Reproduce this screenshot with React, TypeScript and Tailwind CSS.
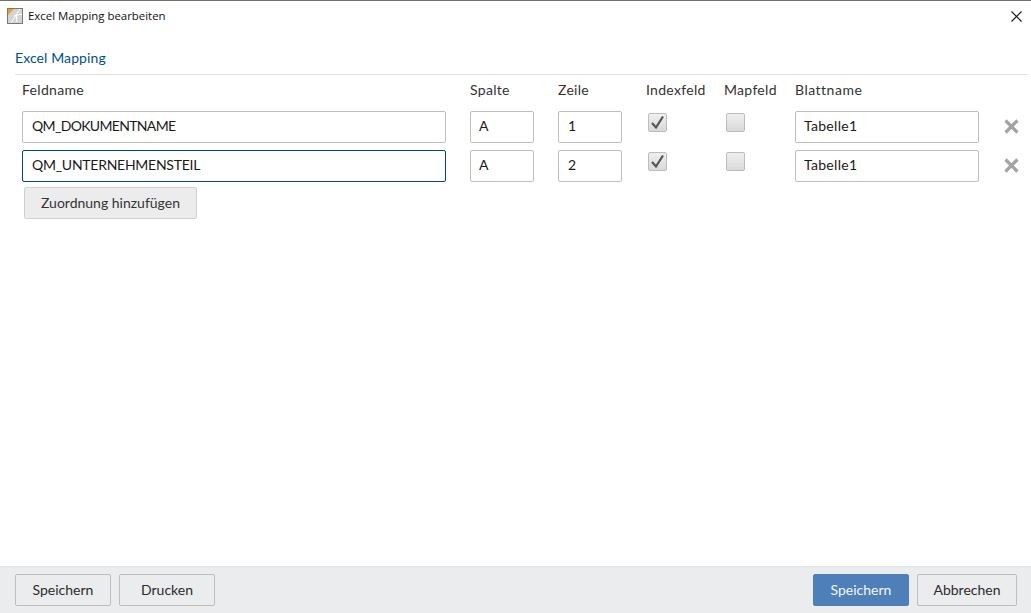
import React from "react";

const COLS = "grid grid-cols-[424px_64px_64px_54px_47px_184px_16px] gap-x-6 items-start";
const UI = "font-['Lato','Noto_Sans',sans-serif]";

function TitleIcon() {
  return (
    <svg width="16" height="16" viewBox="0 0 16 16" className="shrink-0">
      <rect x="0.5" y="0.5" width="15" height="15" fill="#d4d4d4" stroke="#777" />
      <path d="M1 1h6L1 7z" fill="#f0a020" />
      <path d="M4 15L13 1M7 8l8 -2M9 6l1 8" stroke="#fff" strokeWidth="1" fill="none" />
    </svg>
  );
}

function Field({ value, focused, track = "", pad = "pl-[9px]" }: { value: string; focused?: boolean; track?: string; pad?: string }) {
  return (
    <input
      readOnly
      value={value}
      className={`block w-full h-8 pr-2 pb-[3px] rounded-[2px] bg-white text-[14px] text-[#1a1a1a] outline-none border ${pad} ${track} ${
        focused ? "border-[#004a7c]" : "border-[#bdbdbd]"
      }`}
    />
  );
}

function Check({ checked }: { checked?: boolean }) {
  return (
    <div className="mt-[2px] ml-[2px] w-[19px] h-[19px] rounded-[2px] border border-[#bcbcbc] bg-gradient-to-b from-[#efefef] to-[#d9d9d9] flex items-center justify-center">
      {checked && (
        <svg width="15" height="15" viewBox="0 0 15 15">
          <path d="M2 8L6 12.5L13 1.5" stroke="#555" strokeWidth="2.2" fill="none" />
        </svg>
      )}
    </div>
  );
}

function Remove() {
  return (
    <div className="mt-2 ml-px flex">
      <svg width="15" height="15" viewBox="0 0 15 15">
        <path d="M1.5 1.5L13.5 13.5M13.5 1.5L1.5 13.5" stroke="#a3a3a3" strokeWidth="3.2" fill="none" />
      </svg>
    </div>
  );
}

function Row({ name, focused, track }: { name: string; focused?: boolean; track: string }) {
  return (
    <div className={COLS}>
      <Field value={name} focused={focused} track={track} />
      <Field value="A" pad="pl-2" />
      <Field value={focused ? "2" : "1"} />
      <Check checked />
      <Check />
      <Field value="Tabelle1" pad="pl-2" track="tracking-[0.3px]" />
      <Remove />
    </div>
  );
}

function Btn({ children, primary, w }: { children: React.ReactNode; primary?: boolean; w: string }) {
  return (
    <button
      className={`h-8 pb-[2px] rounded-[2px] border text-[14px] ${w} ${
        primary
          ? "bg-[#4f7fb8] border-[#4f7fb8] text-[#f4f7fb]"
          : "bg-[#ebecee] border-[#bdbdbd] text-[#2b2b2b]"
      }`}
    >
      {children}
    </button>
  );
}

export default function App() {
  return (
    <div className={`w-[1031px] h-[613px] bg-white flex flex-col overflow-hidden text-[14px] ${UI}`}>
      <div className="h-px bg-[#6f6f6f]" />
      <div className="h-[31px] flex items-center pl-[7px] pr-[7px] pb-[1px] gap-[5px]">
        <TitleIcon />
        <span className="text-[11.4px] text-[#111] font-['Open_Sans',sans-serif] flex-1">Excel Mapping bearbeiten</span>
        <svg width="11" height="11" viewBox="0 0 11 11" className="mr-[2px]">
          <path d="M0.5 0.5L10.5 10.5M10.5 0.5L0.5 10.5" stroke="#111" strokeWidth="1.1" fill="none" />
        </svg>
      </div>
      <div className="flex-1 pt-[17px] pl-[15px] pr-[3px]">
        <div className="h-[26px] border-b border-[#e2e2e2] text-[14px] leading-[18px] tracking-[0.1px] text-[#00508a]">Excel Mapping</div>
        <div className="pl-[7px] pt-[5px]">
          <div className={`${COLS} h-[31px] leading-[20px] tracking-[0.3px] text-[#333]`}>
            <span>Feldname</span>
            <span>Spalte</span>
            <span>Zeile</span>
            <span>Indexfeld</span>
            <span>Mapfeld</span>
            <span className="tracking-[0.5px]">Blattname</span>
          </div>
          <div className="flex flex-col gap-[7px]">
            <Row name="QM_DOKUMENTNAME" track="tracking-[-0.66px]" />
            <Row name="QM_UNTERNEHMENSTEIL" focused track="tracking-[-0.26px]" />
          </div>
          <button className="mt-[5px] ml-[2px] pb-[2px] w-[173px] h-8 rounded-[2px] border border-[#d0d0d0] bg-[#ececec] text-[14px] text-[#333]">
            Zuordnung hinzufügen
          </button>
        </div>
      </div>
      <div className="h-[47px] bg-[#ebecee] border-t border-[#e2e3e5] pt-[7px] pl-[15px] pr-[14px] flex justify-between">
        <div className="flex gap-2">
          <Btn w="w-[96px]">Speichern</Btn>
          <Btn w="w-[96px]">Drucken</Btn>
        </div>
        <div className="flex gap-2">
          <Btn primary w="w-[96px]">Speichern</Btn>
          <Btn w="w-[100px]">Abbrechen</Btn>
        </div>
      </div>
    </div>
  );
}
